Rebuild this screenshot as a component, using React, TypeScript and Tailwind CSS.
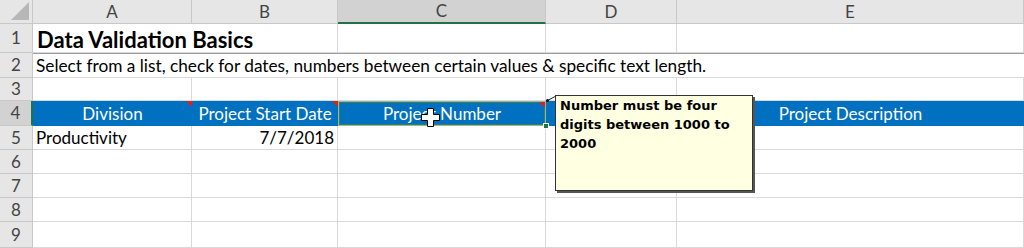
import React from "react";

const cols = ["A", "B", "C", "D", "E"];
const font = { fontFamily: "Lato, 'Open Sans', sans-serif" };

function Cell({
  children,
  className = "",
}: {
  children?: React.ReactNode;
  className?: string;
}) {
  return (
    <div className={`flex items-center border-r border-b border-[#d9d9d9] overflow-visible whitespace-nowrap ${className}`}>
      {children}
    </div>
  );
}

function RowHead({ n, active = false }: { n: number; active?: boolean }) {
  return (
    <div
      className={`flex items-center justify-center border-b border-r border-[#c8c8c8] text-[17px] text-[#444] ${
        active ? "bg-[#d2d2d2] border-r-2 border-r-[#217346]" : "bg-[#e6e6e6]"
      }`}
    >
      {n}
    </div>
  );
}

export default function App() {
  return (
    <div className="relative w-[1024px] h-[248px] overflow-hidden bg-white text-black" style={font}>
      <div className="grid grid-cols-[33px_159px_146px_208px_131px_347px] grid-rows-[24px_29px_25px_23px_25px_24px_24px_24px_24px_26px]">
        {/* header row */}
        <div className="relative bg-[#e6e6e6] border-r border-b border-[#c8c8c8]">
          <div className="absolute right-[3px] bottom-[3px] w-0 h-0 border-l-[18px] border-l-transparent border-b-[18px] border-b-[#b7b7b7]" />
        </div>
        {cols.map((c) => (
          <div
            key={c}
            className={`flex items-center justify-center text-[17px] text-[#444] border-r border-[#c8c8c8] ${
              c === "C" ? "bg-[#d2d2d2] border-b-2 border-b-[#217346]" : "bg-[#e6e6e6] border-b border-b-[#c8c8c8]"
            }`}
          >
            {c}
          </div>
        ))}

        {/* row 1 */}
        <RowHead n={1} />
        <Cell className="col-span-2 pl-[4px] pt-[2px] text-[22px] font-bold">Data Validation Basics</Cell>
        <Cell />
        <Cell />
        <Cell />

        {/* row 2 */}
        <RowHead n={2} />
        <div className="col-span-5 flex items-center whitespace-nowrap pl-[3px] text-[17.25px] border-t border-t-[#9e9e9e] border-b border-b-[#d9d9d9]">
          Select from a list, check for dates, numbers between certain values &amp; specific text length.
        </div>

        {/* row 3 */}
        <RowHead n={3} />
        <Cell />
        <Cell />
        <Cell />
        <Cell />
        <Cell />

        {/* row 4 */}
        <RowHead n={4} active />
        <div className="relative flex items-center justify-center bg-[#0070c0] text-white text-[17px]">
          Division
          <div className="absolute right-0 top-0 w-0 h-0 border-l-[6px] border-l-transparent border-t-[6px] border-t-[#e0201b]" />
        </div>
        <div className="relative flex items-center justify-center bg-[#0070c0] text-white text-[17px]">
          Project Start Date
          <div className="absolute right-0 top-0 w-0 h-0 border-l-[6px] border-l-transparent border-t-[6px] border-t-[#e0201b]" />
        </div>
        <div className="relative flex items-center justify-center bg-[#0070c0] text-white text-[17px] border border-[#8fb9a0] outline outline-1 outline-[#3d7d57] -outline-offset-2">
          Project Number
          <div className="absolute right-0 top-0 w-0 h-0 border-l-[6px] border-l-transparent border-t-[6px] border-t-[#e0201b]" />
          <div className="absolute right-[-4px] bottom-[-4px] w-[6px] h-[6px] bg-[#217346] border border-white" />
        </div>
        <div className="bg-[#0070c0]" />
        <div className="flex items-center justify-center bg-[#0070c0] text-white text-[17px]">Project Description</div>

        {/* row 5 */}
        <RowHead n={5} />
        <Cell className="pl-[3px] text-[17px]">Productivity</Cell>
        <Cell className="justify-end pr-[3px] text-[17px]">7/7/2018</Cell>
        <Cell />
        <Cell />
        <Cell />

        {[6, 7, 8, 9].map((r) => (
          <React.Fragment key={r}>
            <RowHead n={r} />
            <Cell />
            <Cell />
            <Cell />
            <Cell />
            <Cell />
          </React.Fragment>
        ))}
      </div>

      {/* connector line */}
      <svg className="absolute left-0 top-0" width="1024" height="248">
        <line x1="547.5" y1="100.5" x2="556" y2="96" stroke="#222" strokeWidth="1" />
        <circle cx="547.5" cy="100.5" r="1.6" fill="#111" />
      </svg>

      {/* input message tooltip */}
      <div
        className="absolute left-[555px] top-[95px] w-[198px] h-[96px] bg-[#ffffe1] border border-[#333] shadow-[2px_2px_0_#555] pl-[4px] pt-[0px] text-[13px] font-bold leading-[19px] text-black"
        style={{ fontFamily: "'DejaVu Sans', Verdana, sans-serif" }}
      >
        Number must be four
        <br />
        digits between 1000 to
        <br />
        2000
      </div>

      {/* cursor */}
      <svg className="absolute left-[421px] top-[108px]" width="19" height="19" viewBox="0 0 19 19">
        <path
          d="M6.5 0.5 H12.5 V6.5 H18.5 V12.5 H12.5 V18.5 H6.5 V12.5 H0.5 V6.5 H6.5 Z"
          fill="#fff"
          stroke="#000"
          strokeWidth="1"
        />
      </svg>
    </div>
  );
}
